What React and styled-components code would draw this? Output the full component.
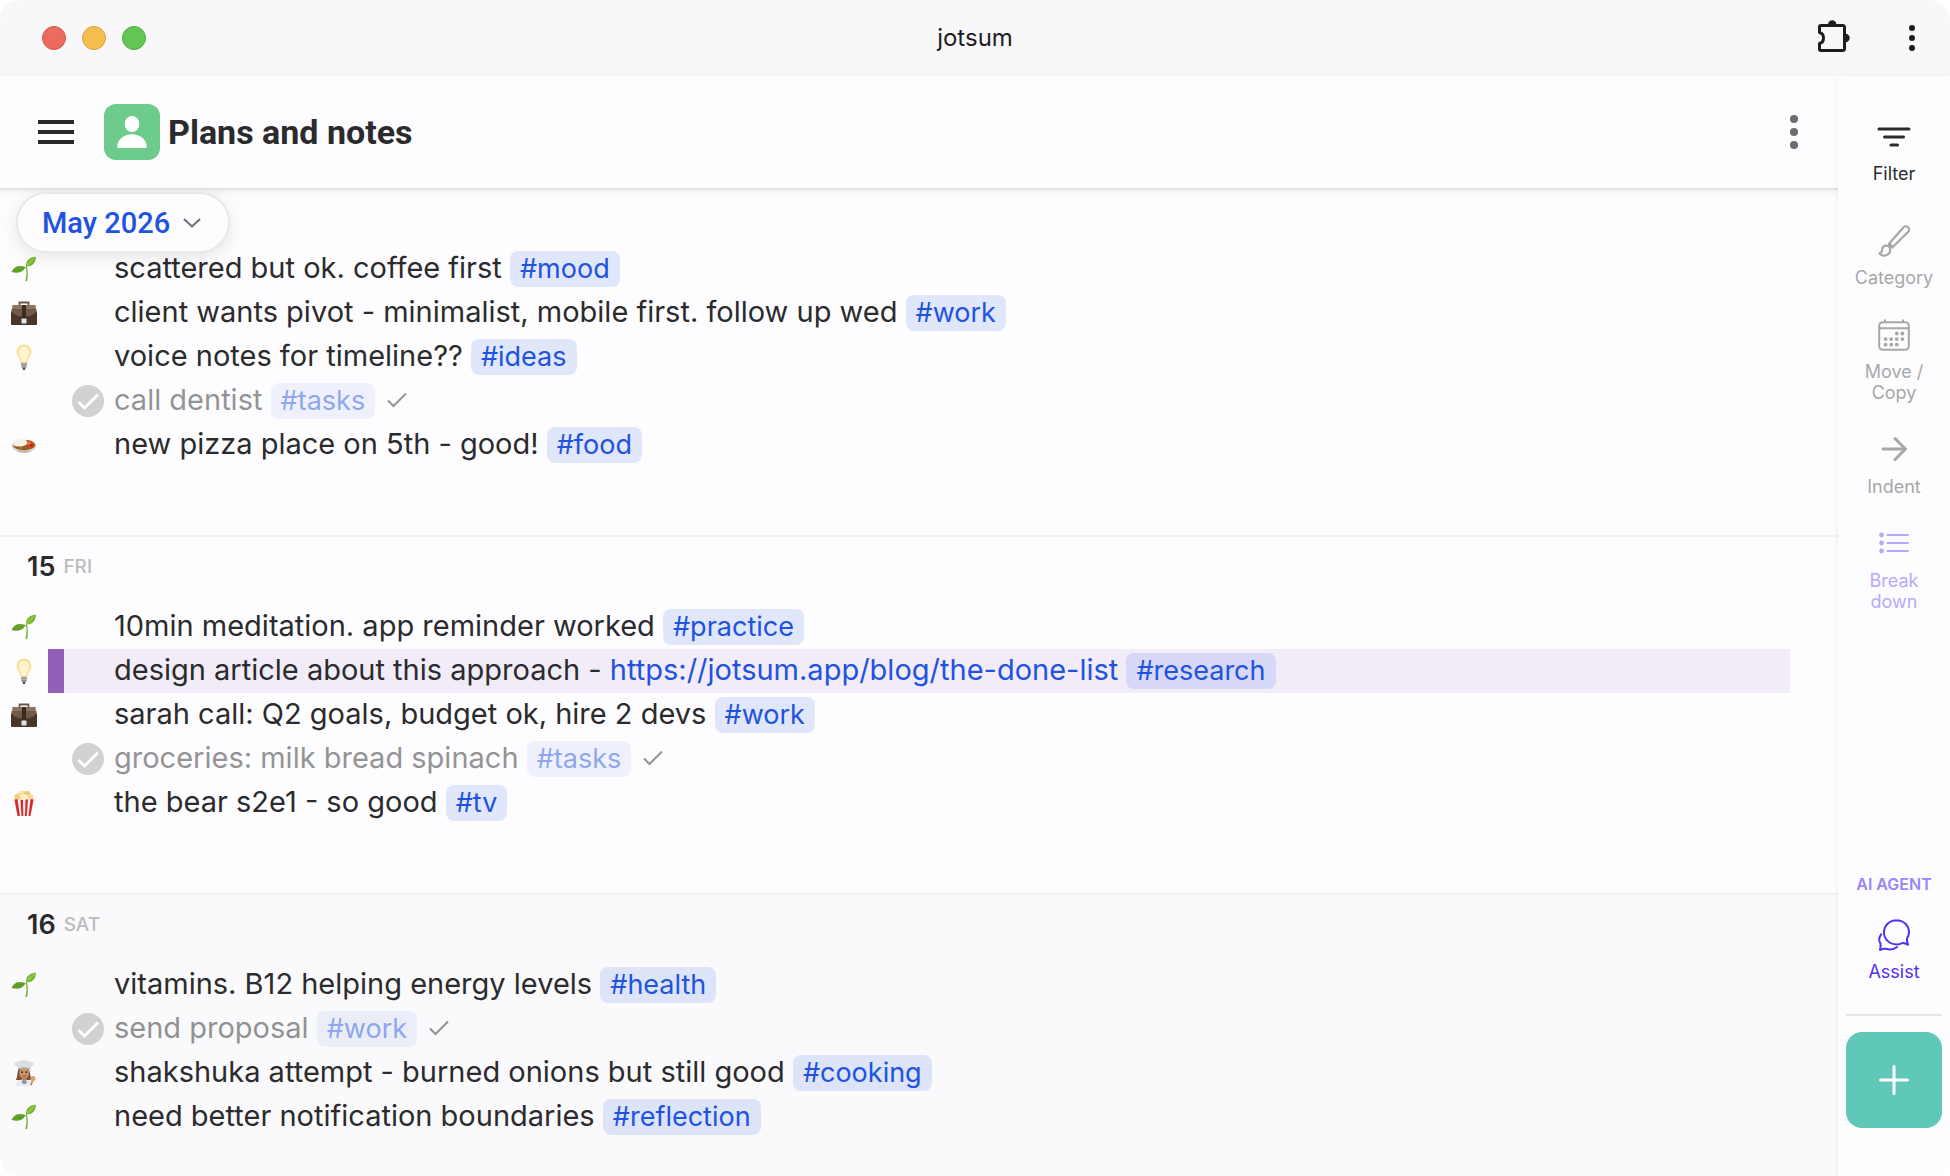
import React from 'react'
import styled, { createGlobalStyle } from 'styled-components'

const blue = '#2152e0'
const ink = '#2b2b2d'

const icons = {
  filter: (
    <svg width="34" height="32" viewBox="0 0 34 32" fill="none" stroke="currentColor" strokeWidth="3" strokeLinecap="round">
      <path d="M2 8h30M7.500 16h19M14 24h6.500" />
    </svg>
  ),
  brush: (
    <svg width="32" height="32" viewBox="0 0 32 32" fill="none" stroke="currentColor" strokeWidth="2.200" strokeLinejoin="round" strokeLinecap="round">
      <path d="M11.200 18.500 25.600 2.300a3.200 3.200 0 0 1 4.600 4.500L14.800 22z" />
      <path d="M10.800 19.200l3.300 3.300" />
      <path d="M1.500 28.200c2 0 2.400-1.500 2.500-3 .2-2.800 2-4.600 4.200-4.600 2.500 0 4 1.900 4 4.100 0 3.400-2.600 6-6 6-2 0-3.800-.9-4.700-2.500z" />
    </svg>
  ),
  calendar: (
    <svg width="32" height="32" viewBox="0 0 32 32" fill="none" stroke="currentColor" strokeWidth="2">
      <rect x="1.200" y="3.200" width="29.600" height="27.600" rx="3.500" />
      <path d="M1.500 9.200h29M7 .5V3M25 .5V3" />
      <g fill="currentColor" stroke="none">
        <circle cx="18.800" cy="14.500" r="1.900" />
        <circle cx="24.400" cy="14.500" r="1.900" />
        <circle cx="7.600" cy="20.100" r="1.900" />
        <circle cx="13.200" cy="20.100" r="1.900" />
        <circle cx="18.800" cy="20.100" r="1.900" />
        <circle cx="24.400" cy="20.100" r="1.900" />
        <circle cx="7.600" cy="25.700" r="1.900" />
        <circle cx="13.200" cy="25.700" r="1.900" />
        <circle cx="18.800" cy="25.700" r="1.900" />
      </g>
    </svg>
  ),
  arrow: (
    <svg width="32" height="32" viewBox="0 0 32 32" fill="none" stroke="currentColor" strokeWidth="3" strokeLinecap="round" strokeLinejoin="round">
      <path d="M5 15h22M17 4.500 27.500 15 17 25.500" />
    </svg>
  ),
  list: (
    <svg width="32" height="32" viewBox="0 0 32 32" fill="none" stroke="currentColor" strokeWidth="2" strokeLinecap="round">
      <path d="M9.500 7h20.500M9.500 15h20.500M9.500 23h20.500" />
      <g fill="currentColor" stroke="none">
        <circle cx="3.500" cy="7" r="2.400" />
        <circle cx="3.500" cy="15" r="2.400" />
        <circle cx="3.500" cy="23" r="2.400" />
      </g>
    </svg>
  ),
  chat: (
    <svg width="32" height="32" viewBox="0 0 32 32" fill="none" stroke="currentColor" strokeWidth="2" strokeLinejoin="round" strokeLinecap="round">
      <path d="M18.500 1.200C11.400 1.200 6 6.500 6 13.300S11.400 25.400 18.500 25.400c2.100 0 4-.5 5.700-1.300 1.700-.2 3.600.4 5.800 1.600-.8-2-1.300-4-1-6.300a12 12 0 0 0 2-6.100c0-6.800-5.400-12.100-12.500-12.100z" />
      <path d="M3.200 15.200c-1.200 1.700-2 3.300-2 5.300 0 1.300.4 2.600 1.200 3.800.4 2 .3 4-.4 6.700 2.300-1 4.300-1.500 6-1.200 3.700 1.100 7.800.7 11-1.800" />
    </svg>
  ),
}

const emojis = {
  seedling: (
    <svg width="26" height="26" viewBox="0 0 26 26">
      <path d="M14.500 10.500c1.500 4.500 1.200 9-.2 14.500h1.900c1-5 1-10.500-.4-15z" fill="#74b62e" />
      <path d="M15 10.500c-.5-6 4-9.500 10-9.700-.4 6-3.500 9.900-10 9.700z" fill="#6fae2c" />
      <path d="M15 10.500c1-5 5-8 10-9.700-2.200 4.700-5 8.200-10 9.700z" fill="#8cc63f" />
      <path d="M14.600 11.200C8 8.800 3.500 9.800.5 16c6 1.800 11.200.6 14.100-4.800z" fill="#5f9f27" />
      <path d="M14.600 11.200C9 10.300 4.500 12 .5 16 4 13 10 9 14.600 11.200z" fill="#8cc63f" />
    </svg>
  ),
  briefcase: (
    <svg width="26" height="26" viewBox="0 0 26 26">
      <path d="M8.500 5V2.500h9V5" fill="none" stroke="#6b5648" strokeWidth="1.800" />
      <path d="M1.500 5h23l.8 8H.7z" fill="#8b7160" />
      <path d="M0 11.500h26V24a1 1 0 0 1-1 1H1a1 1 0 0 1-1-1z" fill="#4a3529" />
      <path d="M.5 9h25v3c-4 4-8 4.300-12.500 4.300S4.500 16 .5 12z" fill="#71594a" />
      <path d="M11 5h4v14h-4z" fill="#3b2a20" />
      <rect x="10.500" y="18.500" width="5" height="5" rx=".8" fill="#e4e4e4" />
    </svg>
  ),
  bulb: (
    <svg width="26" height="26" viewBox="0 0 26 26">
      <path d="M13 .5c-4.300 0-7.500 3.200-7.500 7.300 0 4.500 3.500 6.300 4 11.200h7c.5-4.900 4-6.700 4-11.200C20.500 3.700 17.300.5 13 .5z" fill="#f8e3a0" />
      <path d="M13 3c-3 0-5 2.200-5 5 0 3.500 2.500 5.500 3 10h4c.5-4.500 3-6.500 3-10 0-2.800-2-5-5-5z" fill="#fdf5d0" />
      <path d="M10 18.500h6l-.5 5h-5z" fill="#b7b5ac" />
      <path d="M10.200 20.500h5.600M10.500 22.500h5" stroke="#827f78" strokeWidth=".8" />
      <path d="M11.200 23.500h3.600L13.800 26h-1.600z" fill="#4e4a45" />
    </svg>
  ),
  curry: (
    <svg width="26" height="26" viewBox="0 0 26 26">
      <ellipse cx="13" cy="14" rx="12.500" ry="6.500" fill="#dcd8d3" />
      <path d="M5 18.500c3 3 13 3 16 0z" fill="#b9b3ac" />
      <ellipse cx="13" cy="13.200" rx="11" ry="5" fill="#9a5a1c" />
      <path d="M14 8.500c5-1 9 1 10 4-1 2.500-3 3.500-6 4z" fill="#cf4a26" />
      <path d="M2 13c0-4 4-6.300 8.500-6.300 4 0 6 2.500 6 5.300-4 3-11 3.500-14.500 1z" fill="#f4f0e8" />
      <circle cx="18" cy="11" r="1.300" fill="#ef7a4b" />
      <circle cx="20.500" cy="13.500" r="1.200" fill="#8d2715" />
      <circle cx="10" cy="16" r="1" fill="#6f9a35" />
    </svg>
  ),
  popcorn: (
    <svg width="26" height="26" viewBox="0 0 26 26">
      <circle cx="7" cy="7" r="3.600" fill="#f1cf76" />
      <circle cx="11" cy="4" r="3.400" fill="#f7e2a3" />
      <circle cx="16" cy="4.500" r="3.400" fill="#edc868" />
      <circle cx="19" cy="7.500" r="3.400" fill="#f6dc94" />
      <circle cx="13" cy="7.500" r="3.600" fill="#fbefc4" />
      <path d="M3.500 9.500c3-1.500 6 1 9.500 0s6.500-1 9.500 0L19.500 26h-13z" fill="#f2eeee" />
      <path d="M3.500 9.500l3-.5 2.400 17H6.500zM9.500 9.700l2.500.3.300 16h-1.800zM14.500 9.700l2.500-.4-1.200 16.700H14zM19.500 9l3 .5L19.500 26h-2z" fill="#d52b2b" />
    </svg>
  ),
  cook: (
    <svg width="26" height="26" viewBox="0 0 26 26">
      <path d="M7.500 9c-1.500 4-1 8-2.500 11h16c-2-3-1.500-7-3-11z" fill="#7f5032" />
      <path d="M4.500 26c0-4.500 3-6.500 8.500-6.500s8.500 2 8.500 6.500z" fill="#e8eaed" />
      <path d="M11 17h4.500l-1 4.500H12z" fill="#b58055" />
      <path d="M10.800 20.500l2.400 1.500 2.500-1.500-.6 3.200h-3.600z" fill="#5c8ac4" />
      <ellipse cx="13.200" cy="12.800" rx="5" ry="6" fill="#c99468" />
      <circle cx="11" cy="12.200" r=".9" fill="#39251a" />
      <circle cx="15.400" cy="12.200" r=".9" fill="#39251a" />
      <path d="M11.600 15.800c1 .8 2.200.8 3.200 0" stroke="#8c3b2e" fill="none" />
      <path d="M7 9 5.500 6C1.500 5 3 1 7 2c2-2.500 10-2.500 12 0 4-.8 5.500 3 1.500 4l-1 3C16 7.800 11 7.800 7 9z" fill="#dcdddf" />
      <path d="M7 8.800c3.500-1.300 9-1.300 12.500 0" stroke="#a9abae" fill="none" />
      <path d="M20 25l2.500-7" stroke="#b98145" strokeWidth="1.600" />
      <circle cx="22" cy="18.500" r="2.600" fill="#d9a373" />
    </svg>
  ),
}

const days = [
  {
    rows: [
      { emoji: 'seedling', text: 'scattered but ok. coffee first', tag: '#mood' },
      { emoji: 'briefcase', text: 'client wants pivot - minimalist, mobile first. follow up wed', tag: '#work' },
      { emoji: 'bulb', text: 'voice notes for timeline??', tag: '#ideas' },
      { done: true, text: 'call dentist', tag: '#tasks' },
      { emoji: 'curry', text: 'new pizza place on 5th - good!', tag: '#food' },
    ],
  },
  {
    date: '15',
    weekday: 'FRI',
    rows: [
      { emoji: 'seedling', text: '10min meditation. app reminder worked', tag: '#practice' },
      {
        emoji: 'bulb',
        text: 'design article about this approach - ',
        link: 'https://jotsum.app/blog/the-done-list',
        tag: '#research',
        selected: true,
      },
      { emoji: 'briefcase', text: 'sarah call: Q2 goals, budget ok, hire 2 devs', tag: '#work' },
      { done: true, text: 'groceries: milk bread spinach', tag: '#tasks' },
      { emoji: 'popcorn', text: 'the bear s2e1 - so good', tag: '#tv' },
    ],
  },
  {
    date: '16',
    weekday: 'SAT',
    weekend: true,
    rows: [
      { emoji: 'seedling', text: 'vitamins. B12 helping energy levels', tag: '#health' },
      { done: true, text: 'send proposal', tag: '#work' },
      { emoji: 'cook', text: 'shakshuka attempt - burned onions but still good', tag: '#cooking' },
      { emoji: 'seedling', text: 'need better notification boundaries', tag: '#reflection' },
    ],
  },
]

function Dots({ size, gap }) {
  const height = gap * 2 + size
  return (
    <svg width={size} height={height} fill="currentColor">
      <circle cx={size / 2} cy={size / 2} r={size / 2} />
      <circle cx={size / 2} cy={height / 2} r={size / 2} />
      <circle cx={size / 2} cy={height - size / 2} r={size / 2} />
    </svg>
  )
}

function Note({ note }) {
  return (
    <Row>
      <EmojiCell>{note.emoji && emojis[note.emoji]}</EmojiCell>
      <RowBody $selected={note.selected}>
        <Marker $selected={note.selected} />
        <CheckCell>
          {note.done && (
            <CheckLabel>
              <CheckInput type="checkbox" defaultChecked aria-label={note.text} />
              <svg width="32" height="32" viewBox="0 0 32 32">
                <circle cx="16" cy="16" r="16" fill="#d1d1d3" />
                <path d="M6.500 17l6 6L26 9.500" fill="none" stroke="#fff" strokeWidth="3" />
              </svg>
            </CheckLabel>
          )}
        </CheckCell>
        <NoteText $done={note.done}>
          {note.text}
          {note.link && <NoteLink href={note.link}>{note.link}</NoteLink>}{' '}
          <Tag href={note.tag}>{note.tag}</Tag>
          {note.done && (
            <Tick width="20" height="16" viewBox="0 0 20 16">
              <path d="M1 8.500l5.500 5.500L19 1.500" fill="none" stroke="currentColor" strokeWidth="2" />
            </Tick>
          )}
        </NoteText>
      </RowBody>
    </Row>
  )
}

function Tool({ icon, label, color }) {
  return (
    <ToolButton type="button" $color={color}>
      {icons[icon]}
      <span>{label}</span>
    </ToolButton>
  )
}

export default function App() {
  return (
    <Window>
      <GlobalStyle />
      <TitleBar>
        <Lights>
          <Light $fill="#ec6a5e" $edge="#d5574c" />
          <Light $fill="#f5bf4f" $edge="#d9a23c" />
          <Light $fill="#61c654" $edge="#4dab40" />
        </Lights>
        <AppName>jotsum</AppName>
        <TitleActions>
          <IconButton type="button" aria-label="Extensions">
            <svg width="32" height="36" viewBox="0 0 32 36" fill="none" stroke="currentColor" strokeWidth="3" strokeLinejoin="round">
              <path d="M3 5.500h22a1.500 1.500 0 0 1 1.500 1.500v22a1.500 1.500 0 0 1-1.500 1.500H3A1.500 1.500 0 0 1 1.500 29v-5.500c2.500-.6 4-2.800 4-5.500s-1.500-4.900-4-5.500V7A1.500 1.500 0 0 1 3 5.500z" />
              <path d="M10 4.500a4.200 4.200 0 0 1 8.400 0zM27.500 13.800a4.200 4.200 0 0 1 0 8.400z" fill="currentColor" stroke="none" />
            </svg>
          </IconButton>
          <IconButton type="button" aria-label="Window menu">
            <Dots size={6} gap={10} />
          </IconButton>
        </TitleActions>
      </TitleBar>
      <Columns>
        <Main>
          <Header>
            <IconButton type="button" aria-label="Menu">
              <svg width="36" height="24" fill={ink}>
                <path d="M0 0h36v4H0zM0 10h36v4H0zM0 20h36v4H0z" />
              </svg>
            </IconButton>
            <Avatar>
              <svg width="30" height="32" viewBox="0 0 30 32" fill="#fff">
                <ellipse cx="15" cy="8" rx="7.300" ry="8" />
                <path d="M.3 30.500C.3 23.500 7 18.300 15 18.300s14.700 5.200 14.700 12.200c0 1-.5 1.500-1.500 1.500H1.800c-1 0-1.500-.5-1.500-1.500z" />
              </svg>
            </Avatar>
            <Title>Plans and notes</Title>
            <HeaderMenu type="button" aria-label="More">
              <Dots size={8} gap={13} />
            </HeaderMenu>
          </Header>
          <Timeline>
            <MonthButton type="button">
              May 2026
              <svg width="18" height="10" viewBox="0 0 18 10" fill="none" stroke="#6b6b70" strokeWidth="2">
                <path d="M1 1l8 7.500L17 1" />
              </svg>
            </MonthButton>
            {days.map((day, i) => (
              <Day key={i} $weekend={day.weekend} $cut={!day.date}>
                {day.date && (
                  <DayHeading>
                    {day.date} <Weekday>{day.weekday}</Weekday>
                  </DayHeading>
                )}
                {day.rows.map((note) => (
                  <Note key={note.text} note={note} />
                ))}
              </Day>
            ))}
          </Timeline>
        </Main>
        <Sidebar>
          <FilterGroup>
            <Tool icon="filter" label="Filter" color={ink} />
          </FilterGroup>
          <Tools>
            <Tool icon="brush" label="Category" color="#a7a7a9" />
            <Tool icon="calendar" label={'Move /\nCopy'} color="#a7a7a9" />
            <Tool icon="arrow" label="Indent" color="#a7a7a9" />
            <Tool icon="list" label={'Break\ndown'} color="#b8a8fb" />
          </Tools>
          <Agent>
            <AgentLabel>AI AGENT</AgentLabel>
            <Tool icon="chat" label="Assist" color="#5530ee" />
          </Agent>
          <AddButton type="button" aria-label="Add">
            <svg width="30" height="30" fill="none" stroke="#fff" strokeWidth="3" strokeLinecap="round">
              <path d="M15 1.500v27M1.500 15h27" />
            </svg>
          </AddButton>
        </Sidebar>
      </Columns>
    </Window>
  )
}

const GlobalStyle = createGlobalStyle`
* {
  box-sizing: border-box;
}
body {
  margin: 0;
  background: #fff;
  color: ${ink};
  font-family: Inter, sans-serif;
}
button {
  padding: 0;
  border: 0;
  background: none;
  color: inherit;
  font: inherit;
  cursor: pointer;
}
a {
  color: ${blue};
  text-decoration: none;
}
svg {
  display: block;
}
`

const Window = styled.div`
display: flex;
flex-direction: column;
min-height: 100vh;
border-radius: 20px;
overflow: hidden;
background: #fdfdff;
`

const TitleBar = styled.header`
display: grid;
grid-template-columns: 1fr auto 1fr;
align-items: center;
height: 76px;
padding: 0 35px;
background: #f8f8fa;
`

const Lights = styled.div`
display: flex;
gap: 16px;
padding-left: 7px;
`

const Light = styled.span`
width: 24px;
height: 24px;
border-radius: 50%;
border: 1px solid ${(p) => p.$edge};
background: ${(p) => p.$fill};
`

const AppName = styled.span`
padding-bottom: 2px;
font-size: 24px;
color: #1d1d1f;
`

const TitleActions = styled.div`
display: flex;
align-items: center;
justify-content: flex-end;
gap: 59px;
color: #1d1d1f;
`

const IconButton = styled.button`
display: flex;
flex: none;
`

const Columns = styled.div`
display: flex;
flex: 1;
`

const Main = styled.main`
display: flex;
flex-direction: column;
flex: 1;
min-width: 0;
`

const Header = styled.div`
display: flex;
align-items: center;
height: 114px;
padding: 0 40px 0 38px;
border-bottom: 2px solid #e4e4e7;
box-shadow: 0 2px 6px rgba(0, 0, 0, 0.07);
`

const Avatar = styled.div`
display: flex;
align-items: center;
justify-content: center;
width: 56px;
height: 56px;
margin: 0 8px 0 30px;
border-radius: 12px;
background: #6dcb8b;
`

const Title = styled.h1`
margin: 0;
font-family: Roboto, sans-serif;
font-size: 34px;
font-weight: 700;
`

const HeaderMenu = styled(IconButton)`
margin-left: auto;
color: #6b6b70;
`

const Timeline = styled.div`
position: relative;
display: flex;
flex-direction: column;
flex: 1;
`

const MonthButton = styled.button`
position: absolute;
top: 2px;
left: 16px;
display: flex;
align-items: center;
gap: 13px;
height: 61px;
padding: 0 27px 0 24px;
border: 2px solid #e8e8eb;
border-radius: 31px;
background: #fdfdff;
box-shadow: 0 4px 16px rgba(0, 0, 0, 0.1);
color: ${blue};
font-family: Roboto, sans-serif;
font-size: 29px;
font-weight: 500;
`

const Day = styled.section`
padding: ${(p) => (p.$cut ? '57px 48px 68px 0' : '0 48px 68px 0')};
border-top: ${(p) => (p.$cut ? '0' : '2px solid #f1f1f4')};
background: ${(p) => (p.$weekend ? '#fafafc' : 'transparent')};

&:last-child {
  flex: 1;
  padding-bottom: 36px;
}
`

const DayHeading = styled.h2`
display: flex;
align-items: center;
gap: 8px;
height: 68px;
margin: 0;
padding: 0 0 10px 27px;
font-size: 27px;
font-weight: 600;
`

const Weekday = styled.span`
font-size: 19px;
font-weight: 500;
color: #bbbbbe;
`

const Row = styled.div`
display: flex;
height: 44px;
`

const EmojiCell = styled.div`
display: flex;
align-items: center;
width: 48px;
padding-left: 11px;
`

const RowBody = styled.div`
display: flex;
flex: 1;
background: ${(p) => (p.$selected ? '#f2ecf9' : 'transparent')};
`

const Marker = styled.span`
width: 16px;
background: ${(p) => (p.$selected ? '#915fba' : 'transparent')};
`

const CheckCell = styled.div`
width: 50px;
padding: 6px 0 0 8px;
`

const CheckLabel = styled.label`
position: relative;
display: block;
`

const CheckInput = styled.input`
position: absolute;
width: 32px;
height: 32px;
margin: 0;
opacity: 0;
`

const NoteText = styled.div`
font-size: 29px;
line-height: 42px;
white-space: nowrap;
opacity: ${(p) => (p.$done ? 0.5 : 1)};
`

const NoteLink = styled.a`
color: ${blue};
`

const Tag = styled.a`
display: inline-block;
padding: 0 10px;
border-radius: 8px;
background: rgba(33, 82, 224, 0.13);
font-size: 27px;
line-height: 36px;
`

const Tick = styled.svg`
display: inline-block;
margin-left: 12px;
vertical-align: 2px;
`

const Sidebar = styled.aside`
display: flex;
flex-direction: column;
width: 112px;
padding: 45px 8px 48px;
background: #fdfdff;
box-shadow: 0 0 6px rgba(0, 0, 0, 0.07);
z-index: 1;
`

const FilterGroup = styled.div`
padding-bottom: 41px;
`

const Tools = styled.div`
display: flex;
flex-direction: column;
gap: 31px;
`

const ToolButton = styled.button`
display: flex;
flex-direction: column;
align-items: center;
gap: 10px;
width: 100%;
color: ${(p) => p.$color};
font-size: 18px;
line-height: 21px;
white-space: pre-line;
`

const Agent = styled.div`
margin-top: auto;
padding-bottom: 32px;
border-bottom: 2px solid #e5e5e8;
text-align: center;
`

const AgentLabel = styled.div`
padding-bottom: 24px;
font-size: 16px;
font-weight: 600;
line-height: 21px;
color: #9a86f9;
`

const AddButton = styled.button`
display: flex;
align-items: center;
justify-content: center;
height: 96px;
margin-top: 16px;
border-radius: 16px;
background: #5fc8b8;
`
